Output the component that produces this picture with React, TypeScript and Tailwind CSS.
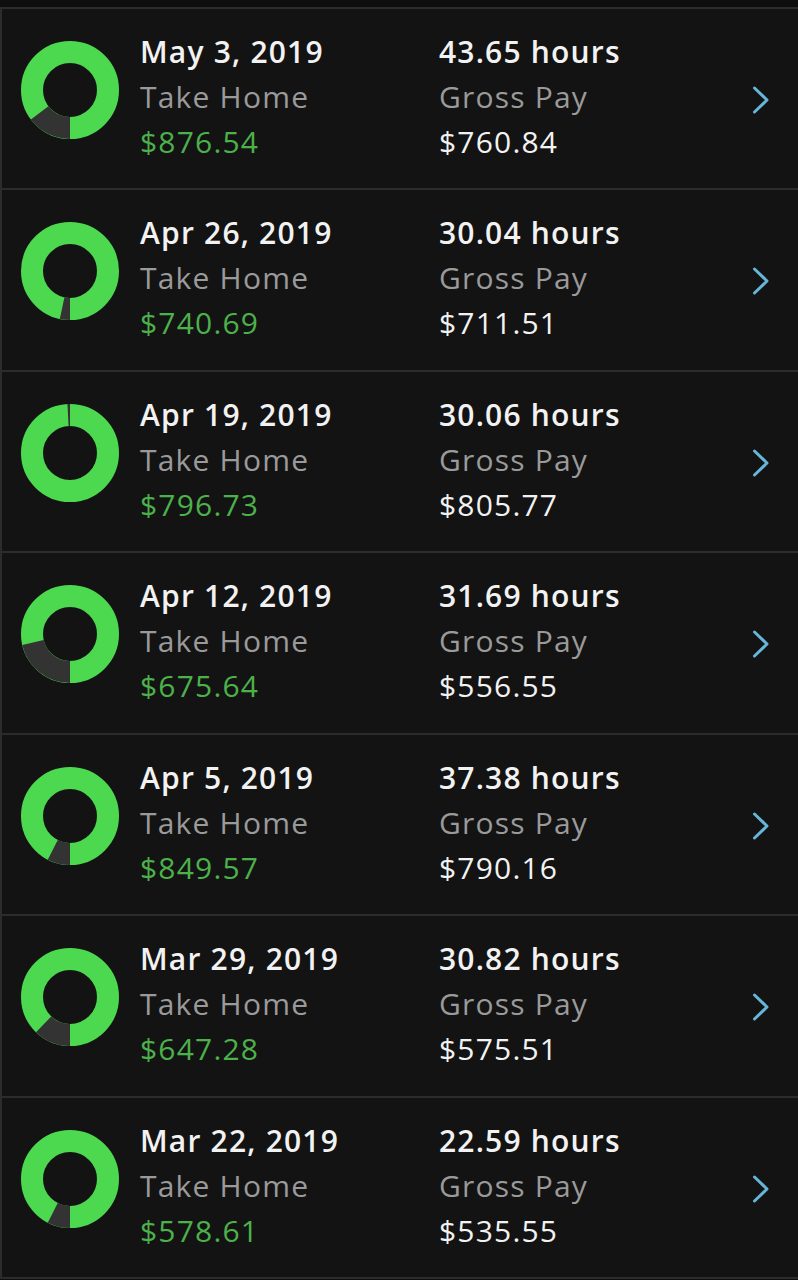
const rows = [
  { date: "May 3, 2019", takeHome: "$876.54", hours: "43.65 hours", gross: "$760.84", from: 180, to: 233 },
  { date: "Apr 26, 2019", takeHome: "$740.69", hours: "30.04 hours", gross: "$711.51", from: 180, to: 192 },
  { date: "Apr 19, 2019", takeHome: "$796.73", hours: "30.06 hours", gross: "$805.77", from: 357, to: 360 },
  { date: "Apr 12, 2019", takeHome: "$675.64", hours: "31.69 hours", gross: "$556.55", from: 180, to: 257 },
  { date: "Apr 5, 2019", takeHome: "$849.57", hours: "37.38 hours", gross: "$790.16", from: 180, to: 207 },
  { date: "Mar 29, 2019", takeHome: "$647.28", hours: "30.82 hours", gross: "$575.51", from: 180, to: 224 },
  { date: "Mar 22, 2019", takeHome: "$578.61", hours: "22.59 hours", gross: "$535.55", from: 180, to: 207 },
];

// point on a circle, degrees clockwise from 12 o'clock
function pt(cx: number, cy: number, r: number, deg: number) {
  const a = (deg * Math.PI) / 180;
  return [cx + r * Math.sin(a), cy - r * Math.cos(a)];
}

function Donut({ from, to }: { from: number; to: number }) {
  const R = 49;
  const r = 27;
  const c = 49;
  const [x1, y1] = pt(c, c, R, from);
  const [x2, y2] = pt(c, c, R, to);
  const [x3, y3] = pt(c, c, r, to);
  const [x4, y4] = pt(c, c, r, from);
  const large = to - from > 180 ? 1 : 0;
  const d = `M${x1} ${y1} A${R} ${R} 0 ${large} 1 ${x2} ${y2} L${x3} ${y3} A${r} ${r} 0 ${large} 0 ${x4} ${y4} Z`;
  return (
    <svg width="98" height="98" viewBox="0 0 98 98" className="shrink-0">
      <circle cx={c} cy={c} r={38} fill="none" stroke="#4dd94f" strokeWidth={22} />
      <path d={d} fill="#333333" />
    </svg>
  );
}

function Chevron() {
  return (
    <svg width="18" height="28" viewBox="0 0 18 28" fill="none">
      <path d="M2.5 2 L15 14 L2.5 26" stroke="#66b6d8" strokeWidth="3" strokeLinecap="round" strokeLinejoin="round" />
    </svg>
  );
}

export default function App() {
  return (
    <div className="h-[1280px] w-[798px] overflow-hidden bg-[#0e0e0e] font-['Open_Sans',sans-serif]">
      <div className="h-[6.5px]" />
      {rows.map((row) => (
        <div
          key={row.date}
          className="flex h-[181.5px] items-start border-t-2 border-l-2 border-[#2c2c2c] bg-[#131313]"
        >
          <div className="ml-[19px] mt-[32px]">
            <Donut from={row.from} to={row.to} />
          </div>
          <div className="ml-[21px] mt-[20px] w-[299px] text-[30px] leading-[45px] tracking-[1.2px]">
            <div className="font-semibold text-[#f2f2f2]">{row.date}</div>
            <div className="text-[#9a9a9a]">Take Home</div>
            <div className="text-[#4cb14b]">{row.takeHome}</div>
          </div>
          <div className="mt-[20px] w-[313px] text-[30px] leading-[45px] tracking-[1.2px]">
            <div className="font-semibold text-[#f2f2f2]">{row.hours}</div>
            <div className="text-[#9a9a9a]">Gross Pay</div>
            <div className="text-[#f2f2f2]">{row.gross}</div>
          </div>
          <div className="mt-[77px]">
            <Chevron />
          </div>
        </div>
      ))}
      <div className="h-[2px] bg-[#2c2c2c]" />
    </div>
  );
}
